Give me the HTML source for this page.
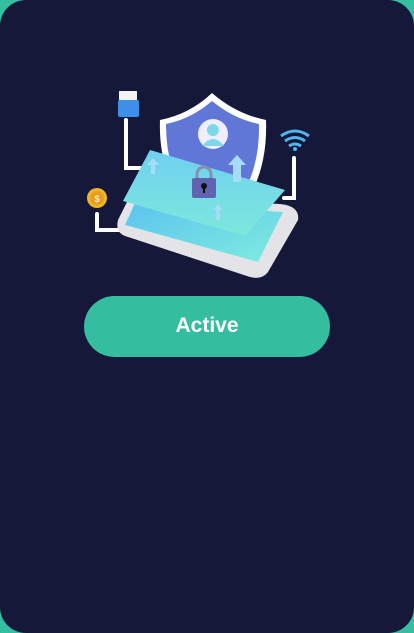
<!DOCTYPE html>
<html><head><style>
html,body{margin:0;padding:0;width:414px;height:633px;background:#34bfa0;overflow:hidden}
.card{position:absolute;left:0;top:0;width:414px;height:633px;background:#16183a;border-radius:26px}
.btn{position:absolute;left:84px;top:296px;width:246px;height:61px;border-radius:31px;background:#35bda0;color:#fff;font:bold 21px "Liberation Sans",sans-serif;text-align:center;line-height:59px}
svg{position:absolute;left:0;top:0}
</style></head><body>
<div class="card"></div>
<svg width="414" height="300" viewBox="0 0 414 300">
<defs>
<linearGradient id="g1" x1="0" y1="0" x2="0" y2="1"><stop offset="0" stop-color="#6fd0f0"/><stop offset="1" stop-color="#7de8dc"/></linearGradient>
<linearGradient id="g2" x1="0" y1="0" x2="1" y2="1"><stop offset="0" stop-color="#5cc3ef"/><stop offset="1" stop-color="#80ecde"/></linearGradient>
</defs>
<path d="M126 120 V168 H142" stroke="#fff" stroke-width="4" fill="none" stroke-linecap="round"/>
<path d="M97 214 V230 H124" stroke="#fff" stroke-width="4" fill="none" stroke-linecap="round"/>
<path d="M294 158 V198 H284" stroke="#fff" stroke-width="4" fill="none" stroke-linecap="round"/>
<rect x="119" y="91" width="18" height="9" fill="#f4f4f4"/>
<rect x="118" y="100" width="21" height="17" rx="2" fill="#3d8fe8"/>
<path d="M281 136 Q295 126 309 136" stroke="#4fb6f0" stroke-width="3" fill="none"/>
<path d="M285 141 Q295 134 305 141" stroke="#4fb6f0" stroke-width="3" fill="none"/>
<path d="M289 146 Q295 142 301 146" stroke="#4fb6f0" stroke-width="3" fill="none"/>
<circle cx="295" cy="149" r="2" fill="#4fb6f0"/>
<circle cx="97" cy="198" r="10" fill="#f1b52d"/>
<circle cx="97" cy="198" r="7" fill="#e2a01e"/>
<text x="97" y="202" font-size="9" fill="#fff" text-anchor="middle" font-family="Liberation Sans">$</text>
<path d="M212 93 Q236 114 266 120 Q268 175 240 210 L190 210 Q158 175 160 120 Q190 114 212 93Z" fill="#fff"/>
<path d="M212 101 Q234 119 259 124 Q260 172 236 204 L190 204 Q166 172 166 124 Q191 119 212 101Z" fill="#6077d8"/>
<circle cx="213" cy="134" r="15" fill="#eef"/>
<circle cx="213" cy="130" r="6" fill="#7fd8e8"/>
<path d="M202 146 Q213 132 224 146Z" fill="#7fd8e8"/>
<path d="M130 196 L280 204 Q300 206 298 220 L268 272 Q262 280 250 277 L125 236 Q115 232 118 220Z" fill="#e4e4e8"/>
<path d="M135 203 L283 212 L258 262 L125 225Z" fill="url(#g2)"/>
<path d="M150 150 L285 190 L245 236 L123 201Z" fill="url(#g1)"/>
<path d="M153 158 l-6 7 h4 v9 h4 v-9 h4z" fill="#a6dcf6"/>
<path d="M237 155 l-9 10 h5 v17 h8 v-17 h5z" fill="#a6dcf6"/>
<path d="M218 204 l-5 6 h3 v10 h4 v-10 h3z" fill="#a6dcf6"/>
<path d="M197 180 v-6 a7 7 0 0 1 14 0 v6" stroke="#8a8fb0" stroke-width="3" fill="none"/>
<rect x="192" y="178" width="24" height="20" rx="2" fill="#5f63b0"/>
<circle cx="204" cy="186" r="3" fill="#111"/>
<rect x="203" y="187" width="2" height="6" fill="#111"/>
</svg>
<div class="btn">Active</div>
</body></html>
